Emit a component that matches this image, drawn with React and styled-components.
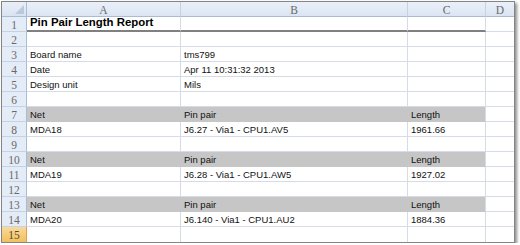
import React from 'react';
import styled, { createGlobalStyle, css } from 'styled-components';

const GlobalStyle = createGlobalStyle`
  html, body {
    margin: 0;
    padding: 0;
    background: #ffffff;
  }
`;

const GRID = '#d5dce8';
const BAND = '#c6c6c6';
const HEAD_LINE = '#a9bcd4';

const Frame = styled.div`
  margin: 1px 0 0 1px;
  width: 512px;
  border: 1px solid #858585;
  box-shadow: 2px 2px 3px rgba(0, 0, 0, 0.45);
  background: #ffffff;
`;

const Sheet = styled.div`
  display: grid;
  grid-template-columns: 25px 154px 227px 78px 28px;
  grid-auto-rows: 15px;
`;

const Corner = styled.div`
  position: relative;
  box-sizing: border-box;
  background: linear-gradient(#e9eff8, #d9e3f0);
  border-right: 1px solid ${HEAD_LINE};
  border-bottom: 1px solid ${HEAD_LINE};

  &::after {
    content: '';
    position: absolute;
    right: 2px;
    bottom: 2px;
    width: 9px;
    height: 9px;
    background: #b9c9de;
    clip-path: polygon(100% 0, 100% 100%, 0 100%);
  }
`;

const ColHeader = styled.div`
  box-sizing: border-box;
  display: flex;
  align-items: center;
  justify-content: center;
  background: linear-gradient(#eaf0f9, #dbe5f2);
  border-right: 1px solid #c4d2e4;
  border-bottom: 1px solid ${HEAD_LINE};
  font-family: 'Liberation Serif', 'Times New Roman', serif;
  font-size: 11.5px;
  color: #6a6a6a;
  padding-top: 1px;
`;

const RowHeader = styled.div`
  box-sizing: border-box;
  display: flex;
  align-items: center;
  justify-content: center;
  background: #e4ecf7;
  border-right: 1px solid ${HEAD_LINE};
  border-bottom: 1px solid #c4d2e4;
  font-family: 'Liberation Serif', 'Times New Roman', serif;
  font-size: 11.5px;
  color: #6a6a6a;
  padding-top: 1px;

  ${(p) =>
    p.$active &&
    css`
      background: linear-gradient(#f9d99c, #f1c15f);
      border-right-color: #e0a040;
      border-bottom: none;
      color: #5c4a2a;
    `}
`;

const Cell = styled.div`
  box-sizing: border-box;
  display: flex;
  align-items: flex-end;
  padding: 0 3px 2px;
  white-space: nowrap;
  overflow: visible;
  font-family: 'Liberation Sans', Arial, sans-serif;
  font-size: 9.5px;
  line-height: 1;
  color: #111111;
  border-right: 1px solid ${GRID};
  border-bottom: 1px solid ${GRID};

  ${(p) =>
    p.$band &&
    css`
      background: ${BAND};
      border-right-color: ${p.$edge ? GRID : BAND};
      border-bottom-color: ${BAND};
    `}

  ${(p) =>
    p.$title &&
    css`
      font-size: 11.4px;
      font-weight: bold;
      padding-bottom: 2px;
      color: #000000;
    `}

  ${(p) =>
    p.$rule &&
    css`
      border-bottom: 2px solid #808080;
    `}

  ${(p) =>
    p.$last &&
    css`
      border-right: none;
    `}

  ${(p) =>
    p.$bottom &&
    css`
      border-bottom: none;
    `}
`;

const rows = [
  { kind: 'title', a: 'Pin Pair Length Report' },
  {},
  { a: 'Board name', b: 'tms799' },
  { a: 'Date', b: 'Apr 11 10:31:32 2013' },
  { a: 'Design unit', b: 'Mils' },
  {},
  { kind: 'band', a: 'Net', b: 'Pin pair', c: 'Length' },
  { a: 'MDA18', b: 'J6.27 - Via1 - CPU1.AV5', c: '1961.66' },
  {},
  { kind: 'band', a: 'Net', b: 'Pin pair', c: 'Length' },
  { a: 'MDA19', b: 'J6.28 - Via1 - CPU1.AW5', c: '1927.02' },
  {},
  { kind: 'band', a: 'Net', b: 'Pin pair', c: 'Length' },
  { a: 'MDA20', b: 'J6.140 - Via1 - CPU1.AU2', c: '1884.36' },
  {},
];

export default function App() {
  return (
    <>
      <GlobalStyle />
      <Frame>
        <Sheet>
          <Corner />
          {['A', 'B', 'C', 'D'].map((col, i) => (
            <ColHeader key={col} style={i === 3 ? { borderRight: 'none' } : undefined}>
              {col}
            </ColHeader>
          ))}

          {rows.map((row, i) => {
            const band = row.kind === 'band';
            const title = row.kind === 'title';
            const bottom = i === rows.length - 1;
            return (
              <React.Fragment key={i}>
                <RowHeader $active={bottom}>{i + 1}</RowHeader>
                <Cell $band={band} $title={title} $rule={title} $bottom={bottom}>
                  {row.a}
                </Cell>
                <Cell $band={band} $rule={title} $bottom={bottom}>
                  {row.b}
                </Cell>
                <Cell $band={band} $edge $rule={title} $bottom={bottom}>
                  {row.c}
                </Cell>
                <Cell $last $bottom={bottom} />
              </React.Fragment>
            );
          })}
        </Sheet>
      </Frame>
    </>
  );
}
